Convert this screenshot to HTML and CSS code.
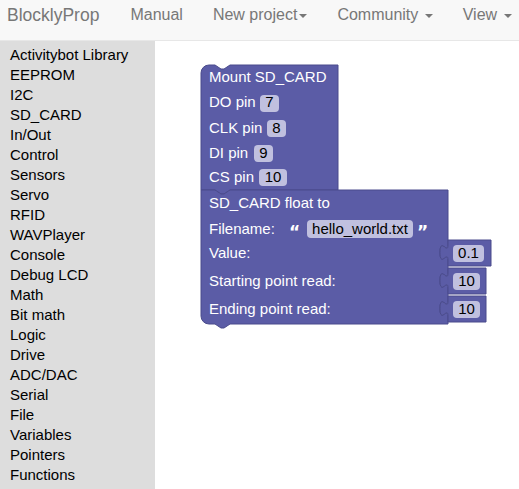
FILE: index.html
```html
<!DOCTYPE html>
<html>
<head>
<meta charset="utf-8">
<link rel="stylesheet" href="styles.css">
</head>
<body>
<nav class="navbar">
  <span class="brand">BlocklyProp</span>
  <ul class="nav">
    <li>Manual</li>
    <li>New project<span class="caret"></span></li>
    <li>Community <span class="caret"></span></li>
    <li>View <span class="caret"></span></li>
  </ul>
</nav>
<div class="main">
  <ul class="toolbox">
    <li>Activitybot Library</li>
    <li>EEPROM</li>
    <li>I2C</li>
    <li>SD_CARD</li>
    <li>In/Out</li>
    <li>Control</li>
    <li>Sensors</li>
    <li>Servo</li>
    <li>RFID</li>
    <li>WAVPlayer</li>
    <li>Console</li>
    <li>Debug LCD</li>
    <li>Math</li>
    <li>Bit math</li>
    <li>Logic</li>
    <li>Drive</li>
    <li>ADC/DAC</li>
    <li>Serial</li>
    <li>File</li>
    <li>Variables</li>
    <li>Pointers</li>
    <li>Functions</li>
  </ul>
  <div class="workspace">
    <svg class="canvas" width="364" height="448" viewBox="0 0 364 448">
      <g transform="translate(-155,-41)">
        <!-- Mount SD_CARD block -->
        <path class="blk" d="M201,190 V73 A8,8 0 0 1 209,65 H215 l6,4 h3 l6,-4 H338 V190 H230 l-6,4 h-3 l-6,-4 Z"/>
        <text class="lbl" x="209" y="82">Mount SD_CARD</text>
        <text class="lbl" x="209" y="107">DO pin</text>
        <rect class="fld" x="260" y="95" width="19" height="17" rx="4"/>
        <text class="val" x="269.5" y="107">7</text>
        <text class="lbl" x="209" y="133">CLK pin</text>
        <rect class="fld" x="267" y="120" width="19" height="17" rx="4"/>
        <text class="val" x="276.5" y="133">8</text>
        <text class="lbl" x="209" y="158">DI pin</text>
        <rect class="fld" x="254" y="145" width="19" height="17" rx="4"/>
        <text class="val" x="263.5" y="158">9</text>
        <text class="lbl" x="209" y="182">CS pin</text>
        <rect class="fld" x="259" y="169" width="28" height="17" rx="4"/>
        <text class="val" x="273" y="182">10</text>

        <!-- SD_CARD float to block -->
        <path class="blk" d="M201,190 H215 l6,4 h3 l6,-4 H448 V245 c0,10 -8,-8 -8,7.5 s8,-2.5 8,7.5 V273 c0,10 -8,-8 -8,7.5 s8,-2.5 8,7.5 V301 c0,10 -8,-8 -8,7.5 s8,-2.5 8,7.5 V324 H230 l-6,4 h-3 l-6,-4 H209 A8,8 0 0 1 201,316 Z"/>
        <text class="lbl" x="209" y="208">SD_CARD float to</text>
        <text class="lbl" x="209" y="234">Filename:</text>
        <text class="lbl quote" x="289" y="238">“</text>
        <rect class="fld" x="307" y="220" width="106" height="18" rx="4"/>
        <text class="val" x="360" y="234">hello_world.txt</text>
        <text class="lbl quote" x="417" y="238">”</text>
        <text class="lbl" x="209" y="258">Value:</text>
        <text class="lbl" x="209" y="286">Starting point read:</text>
        <text class="lbl" x="209" y="314">Ending point read:</text>

        <!-- value blocks -->
        <path class="blk" d="M448,240 H491 V266 H448 V260 c0,-10 -8,8 -8,-7.5 s8,2.5 8,-7.5 Z"/>
        <rect class="fld" x="453" y="245" width="31" height="17" rx="4"/>
        <text class="val" x="468.5" y="258">0.1</text>

        <path class="blk" d="M448,268 H486 V294 H448 V288 c0,-10 -8,8 -8,-7.5 s8,2.5 8,-7.5 Z"/>
        <rect class="fld" x="453" y="273" width="27" height="17" rx="4"/>
        <text class="val" x="466.5" y="286">10</text>

        <path class="blk" d="M448,296 H486 V322 H448 V316 c0,-10 -8,8 -8,-7.5 s8,2.5 8,-7.5 Z"/>
        <rect class="fld" x="453" y="301" width="27" height="17" rx="4"/>
        <text class="val" x="466.5" y="314">10</text>
      </g>
    </svg>
  </div>
</div>
</body>
</html>
```
FILE: styles.css
```css
* { box-sizing: border-box; }
html, body {
  margin: 0;
  padding: 0;
  width: 519px;
  height: 489px;
  overflow: hidden;
  background: #fff;
  font-family: "Liberation Sans", Arial, sans-serif;
}
.navbar {
  height: 41px;
  background: #f8f8f8;
  border-bottom: 1px solid #e7e7e7;
  display: flex;
  align-items: flex-start;
  color: #777;
  white-space: nowrap;
}
.brand {
  font-size: 17.5px;
  line-height: 30px;
  padding-left: 7px;
  margin-right: 16px;
}
.nav {
  list-style: none;
  margin: 0;
  padding: 0;
  display: flex;
}
.nav li {
  font-size: 16px;
  line-height: 30px;
  padding: 0 15px;
}
.caret {
  display: inline-block;
  width: 0;
  height: 0;
  margin-left: 2px;
  vertical-align: middle;
  border-top: 4px solid #777;
  border-left: 4px solid transparent;
  border-right: 4px solid transparent;
}
.main {
  display: flex;
  height: 448px;
}
.toolbox {
  list-style: none;
  margin: 0;
  padding: 4px 0 0 10px;
  width: 155px;
  background: #ddd;
  flex: none;
}
.toolbox li {
  font-size: 15px;
  line-height: 20px;
  color: #000;
}
.workspace {
  flex: 1;
  background: #fff;
}
.canvas { display: block; }
.blk {
  fill: #5b5ca6;
  stroke: #4a4b8c;
  stroke-width: 1;
}
.lbl {
  fill: #fff;
  font-family: "Liberation Sans", Arial, sans-serif;
  font-size: 15px;
}
.quote {
  font-family: "DejaVu Sans", sans-serif;
  font-weight: bold;
  font-size: 17px;
}
.fld { fill: #c0c0df; }
.val {
  fill: #000;
  font-family: "Liberation Sans", Arial, sans-serif;
  font-size: 15px;
  text-anchor: middle;
}
```
